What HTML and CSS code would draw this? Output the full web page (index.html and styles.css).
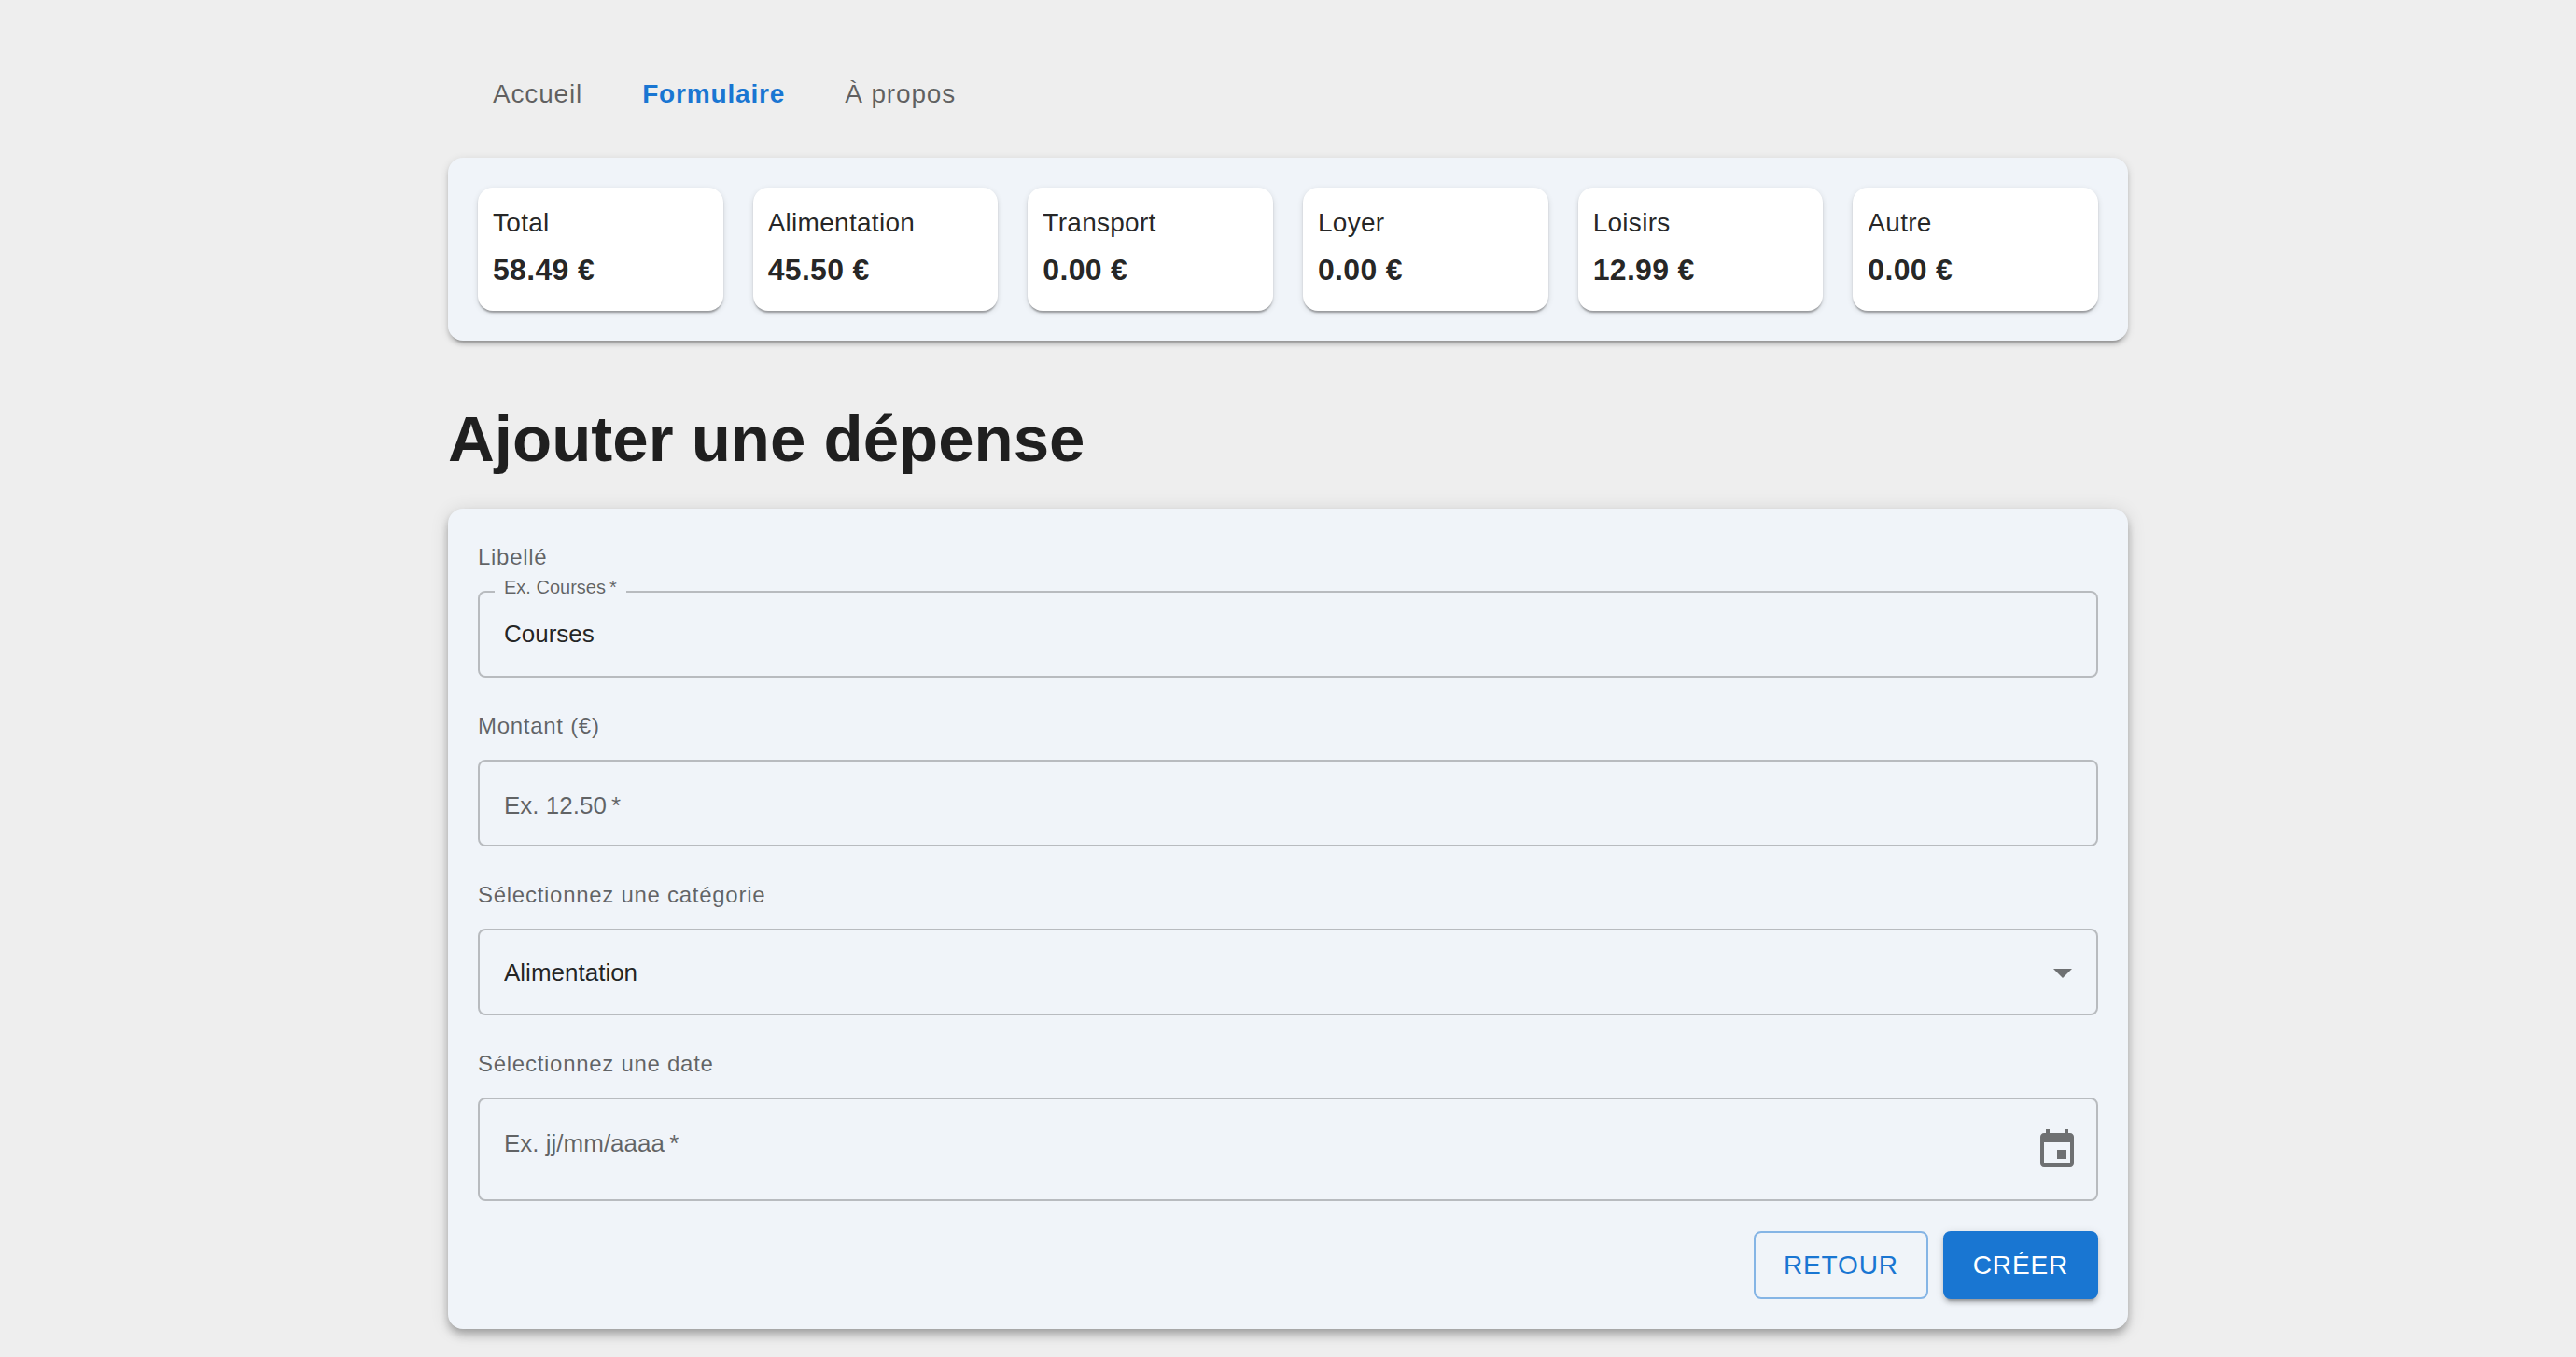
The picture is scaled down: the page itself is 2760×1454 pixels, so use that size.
FILE: index.html
```html
<!DOCTYPE html>
<html lang="fr">
<head>
  <meta charset="utf-8">
  <meta name="viewport" content="width=device-width, initial-scale=1">
  <title>Ajouter une dépense</title>
  <link rel="stylesheet" href="styles.css">
</head>
<body>
  <div class="page">
    <nav class="nav">
      <a class="nav-link" href="#accueil">Accueil</a>
      <a class="nav-link active" href="#formulaire" aria-current="page">Formulaire</a>
      <a class="nav-link" href="#a-propos">À propos</a>
    </nav>

    <section class="panel summary">
      <div class="card"><div class="card-label">Total</div><div class="card-amount">58.49 €</div></div>
      <div class="card"><div class="card-label">Alimentation</div><div class="card-amount">45.50 €</div></div>
      <div class="card"><div class="card-label">Transport</div><div class="card-amount">0.00 €</div></div>
      <div class="card"><div class="card-label">Loyer</div><div class="card-amount">0.00 €</div></div>
      <div class="card"><div class="card-label">Loisirs</div><div class="card-amount">12.99 €</div></div>
      <div class="card"><div class="card-label">Autre</div><div class="card-amount">0.00 €</div></div>
    </section>

    <h1 class="title">Ajouter une dépense</h1>

    <form class="panel form">
      <div class="field">
        <label class="caption" for="libelle">Libellé</label>
        <div class="control">
          <input class="input" id="libelle" type="text" value="Courses">
          <label class="hint shrunk" for="libelle">Ex. Courses&thinsp;*</label>
        </div>
      </div>

      <div class="field">
        <label class="caption" for="montant">Montant (€)</label>
        <div class="control">
          <input class="input" id="montant" type="text" inputmode="decimal">
          <label class="hint" for="montant">Ex. 12.50&thinsp;*</label>
        </div>
      </div>

      <div class="field">
        <label class="caption" for="categorie">Sélectionnez une catégorie</label>
        <div class="control">
          <select class="input select" id="categorie">
            <option selected>Alimentation</option>
            <option>Transport</option>
            <option>Loyer</option>
            <option>Loisirs</option>
            <option>Autre</option>
          </select>
          <svg class="icon arrow" viewBox="0 0 24 24" aria-hidden="true"><path d="M7 10l5 5 5-5z"/></svg>
        </div>
      </div>

      <div class="field">
        <label class="caption" for="date">Sélectionnez une date</label>
        <div class="control control-date">
          <input class="input" id="date" type="text">
          <label class="hint" for="date">Ex. jj/mm/aaaa&thinsp;*</label>
          <button class="icon-button" type="button" aria-label="Choisir une date">
            <svg class="icon" viewBox="0 0 24 24" aria-hidden="true"><path d="M17 12h-5v5h5v-5zM16 1v2H8V1H6v2H5c-1.11 0-1.99.9-1.99 2L3 19c0 1.1.89 2 2 2h14c1.1 0 2-.9 2-2V5c0-1.1-.9-2-2-2h-1V1h-2zm3 18H5V8h14v11z"/></svg>
          </button>
        </div>
      </div>

      <div class="actions">
        <button class="button outlined" type="button">RETOUR</button>
        <button class="button contained" type="submit">CRÉER</button>
      </div>
    </form>
  </div>
</body>
</html>
```

FILE: styles.css
```css
:root {
  --primary: #1976d2;
  --text: rgba(0, 0, 0, 0.87);
  --text-muted: rgba(0, 0, 0, 0.6);
  --surface: #f0f4f9;
  --tracking: 0.01em;
  --tracking-wide: 0.03em;
}

*, *::before, *::after {
  box-sizing: border-box;
}

body {
  margin: 0;
  background: #eeeeee;
  color: var(--text);
  font-family: "Liberation Sans", Arial, sans-serif;
  font-size: 28px;
}

.page {
  max-width: 1864px;
  margin: 0 auto;
  padding: 64px 32px 24px;
}

.nav {
  display: flex;
  flex-wrap: wrap;
  padding: 0 16px;
  margin-bottom: 32px;
}

.nav-link {
  padding: 12px 32px;
  line-height: 49px;
  letter-spacing: var(--tracking-wide);
  color: var(--text-muted);
  text-decoration: none;
}

.nav-link.active {
  color: var(--primary);
  font-weight: 700;
}

.panel {
  padding: 32px;
  border-radius: 16px;
  background: var(--surface);
}

.summary {
  display: grid;
  grid-template-columns: repeat(6, minmax(0, 1fr));
  gap: 32px;
  box-shadow:
    0 6px 2px -4px rgba(0, 0, 0, 0.2),
    0 4px 4px 0 rgba(0, 0, 0, 0.14),
    0 2px 10px 0 rgba(0, 0, 0, 0.12);
}

.card {
  padding: 16px;
  border-radius: 16px;
  background: #ffffff;
  box-shadow:
    0 4px 2px -2px rgba(0, 0, 0, 0.2),
    0 2px 2px 0 rgba(0, 0, 0, 0.14),
    0 2px 6px 0 rgba(0, 0, 0, 0.12);
}

.card-label {
  line-height: 44px;
  letter-spacing: var(--tracking);
}

.card-amount {
  font-size: 32px;
  font-weight: 700;
  line-height: 56px;
  letter-spacing: var(--tracking);
}

.title {
  margin: 64px 0 32px;
  font-size: 69px;
  font-weight: 700;
  line-height: 84px;
}

.form {
  display: flex;
  flex-direction: column;
  gap: 32px;
  box-shadow:
    0 4px 8px -2px rgba(0, 0, 0, 0.2),
    0 8px 10px 0 rgba(0, 0, 0, 0.14),
    0 2px 20px 0 rgba(0, 0, 0, 0.12);
}

.field {
  display: flex;
  flex-direction: column;
  gap: 16px;
}

.caption {
  font-size: 24px;
  line-height: 40px;
  letter-spacing: var(--tracking-wide);
  color: var(--text-muted);
}

.control {
  position: relative;
  display: flex;
  align-items: center;
  border: 2px solid rgba(0, 0, 0, 0.23);
  border-radius: 8px;
}

.input {
  flex: 1;
  min-width: 0;
  height: 89px;
  padding: 0 26px;
  border: 0;
  border-radius: 6px;
  outline: 0;
  background: transparent;
  color: var(--text);
  font-family: inherit;
  font-size: 26px;
}

.control-date .input {
  height: 107px;
}

.select {
  appearance: none;
}

/* Label drawn over an empty field */
.hint {
  position: absolute;
  top: 28px;
  left: 26px;
  font-size: 26px;
  line-height: 38px;
  color: var(--text-muted);
  pointer-events: none;
}

/* Label moved onto the outline once the field has a value */
.hint.shrunk {
  top: -20px;
  left: 16px;
  padding: 0 10px;
  font-size: 20px;
  line-height: 28px;
  background: var(--surface);
}

.icon {
  display: block;
  width: 48px;
  height: 48px;
  fill: rgba(0, 0, 0, 0.54);
}

.arrow {
  position: absolute;
  right: 12px;
  pointer-events: none;
}

.icon-button {
  margin-right: 2px;
  padding: 16px;
  border: 0;
  border-radius: 50%;
  background: transparent;
  cursor: pointer;
}

.actions {
  display: flex;
  justify-content: flex-end;
  gap: 16px;
}

.button {
  padding: 10px 30px;
  border: 2px solid transparent;
  border-radius: 8px;
  font-family: inherit;
  font-size: 28px;
  line-height: 49px;
  letter-spacing: var(--tracking-wide);
  cursor: pointer;
}

.outlined {
  border-color: rgba(25, 118, 210, 0.5);
  background: transparent;
  color: var(--primary);
}

.contained {
  border-color: var(--primary);
  background: var(--primary);
  color: #ffffff;
  box-shadow:
    0 6px 2px -4px rgba(0, 0, 0, 0.2),
    0 4px 4px 0 rgba(0, 0, 0, 0.14),
    0 2px 10px 0 rgba(0, 0, 0, 0.12);
}
```
